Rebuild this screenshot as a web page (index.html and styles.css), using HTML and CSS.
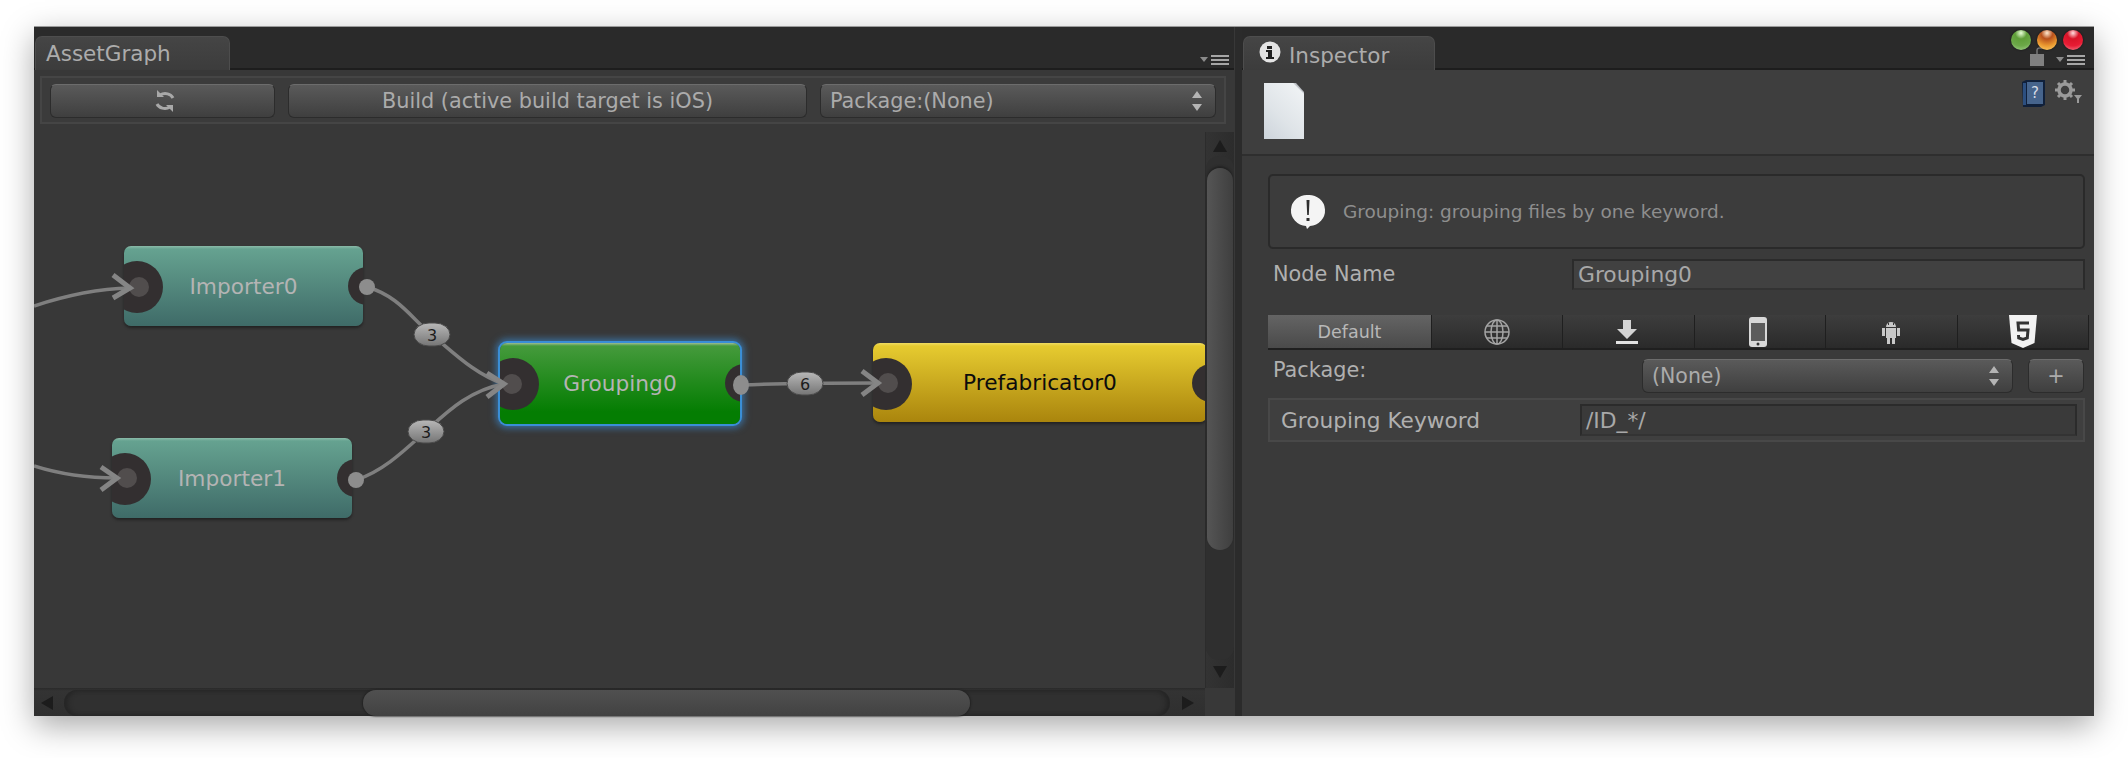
FILE: index.html
```html
<!DOCTYPE html>
<html lang="en">
<head>
    <meta charset="UTF-8">
    <title>AssetGraph</title>
    <link rel="stylesheet" href="styles.css">
</head>
<body>
    <div class="window">
        <!-- Left pane: graph -->
        <div class="graph-pane">
            <div class="tab-bar">
                <div class="tab tab-graph">AssetGraph</div>
                <svg class="menu-icon" width="29" height="10" viewBox="0 0 29 10"><path d="M0 2h8l-4 5z" fill="#8a8a8a"/><path d="M11 0h18v2H11zM11 4h18v2H11zM11 8h18v2H11z" fill="#a6a6a6"/></svg>
            </div>
            <div class="toolbar">
                <div class="btn btn-refresh">
                    <svg width="22" height="24" viewBox="0 0 22 24" fill="none" stroke="#a8a8a8" stroke-width="3"><path d="M19 9C17 5 11 3 6 6"/><path d="M3 15c2 4 8 6 13 3"/><path d="M3 1v7h7z" fill="#a8a8a8" stroke="none"/><path d="M19 23v-7h-7z" fill="#a8a8a8" stroke="none"/></svg>
                </div>
                <div class="btn btn-build">Build (active build target is iOS)</div>
                <div class="btn btn-select btn-package">
                    <span>Package:(None)</span>
                    <svg class="updown" width="12" height="20" viewBox="0 0 12 20"><path d="M6 0l5 7H1zM6 20l-5-7h10z" fill="#b4b4b4"/></svg>
                </div>
            </div>
            <div class="graph-body">
                <div class="canvas">
                    <div class="node node-importer node-i0"><span class="port-in"></span><span class="port-out"></span>Importer0</div>
                    <div class="node node-importer node-i1"><span class="port-in"></span><span class="port-out"></span>Importer1</div>
                    <div class="node node-grouping"><span class="port-in"></span><span class="port-out"></span>Grouping0</div>
                    <div class="node node-prefab"><span class="port-in"></span><span class="port-out"></span>Prefabricator0</div>

                    <svg class="edges" width="1171" height="564" viewBox="0 0 1171 564">
                        <defs>
                            <linearGradient id="badge" x1="0" y1="0" x2="0" y2="1">
                                <stop offset="0" stop-color="#b8b8b8"/>
                                <stop offset="1" stop-color="#757575"/>
                            </linearGradient>
                        </defs>
                        <g fill="#514d4d">
                            <circle cx="105" cy="163" r="10"/>
                            <circle cx="93" cy="354" r="10"/>
                            <circle cx="478" cy="260" r="10"/>
                            <circle cx="854" cy="259" r="10"/>
                        </g>
                        <g fill="none" stroke="#7f7f7f" stroke-width="3.5">
                            <path d="M0 182C30 172 60 165 96 164"/>
                            <path d="M0 342C25 350 55 354 83 354"/>
                            <path d="M333 163C365 172 378 195 398 211S440 250 470 260"/>
                            <path d="M322 356C350 347 372 325 392 307S435 266 470 260"/>
                            <path d="M707 261C750 259 800 259 844 259"/>
                        </g>
                        <g fill="none" stroke="#858585" stroke-width="5">
                            <path d="M79 151L96 164L79 174"/>
                            <path d="M67 343L83 354L67 366"/>
                            <path d="M453 249L470 260L453 273"/>
                            <path d="M828 247L844 259L828 271"/>
                        </g>
                        <g fill="#8d8d8d">
                            <circle cx="333" cy="163" r="8"/>
                            <circle cx="322" cy="356" r="8"/>
                            <ellipse cx="707" cy="261" rx="8" ry="10"/>
                        </g>
                        <g fill="url(#badge)" stroke="#4a4a4a">
                            <rect x="380" y="199" width="36" height="23" rx="15" ry="11.5"/>
                            <rect x="374" y="296" width="36" height="23" rx="15" ry="11.5"/>
                            <rect x="753" y="248" width="36" height="23" rx="15" ry="11.5"/>
                        </g>
                        <g class="badge-text">
                            <text x="398" y="216.500">3</text>
                            <text x="392" y="313.500">3</text>
                            <text x="771" y="265.500">6</text>
                        </g>
                    </svg>
                </div>
                <div class="vscroll">
                    <svg width="14" height="12" viewBox="0 0 14 12"><path d="M7 0l7 12H0z" fill="#1c1c1c"/></svg>
                    <div class="vtrack"><div class="vthumb"></div></div>
                    <svg width="14" height="12" viewBox="0 0 14 12"><path d="M7 12L0 0h14z" fill="#1c1c1c"/></svg>
                </div>
            </div>
            <div class="hscroll-row">
                <div class="hscroll">
                    <svg width="12" height="14" viewBox="0 0 12 14"><path d="M0 7l12-7v14z" fill="#1c1c1c"/></svg>
                    <div class="htrack"><div class="hthumb"></div></div>
                    <svg width="12" height="14" viewBox="0 0 12 14"><path d="M12 7L0 0v14z" fill="#1c1c1c"/></svg>
                </div>
                <div class="corner"></div>
            </div>
        </div>

        <div class="divider"></div>

        <!-- Right pane: inspector -->
        <div class="inspector">
            <div class="tab-bar">
                <div class="tab tab-inspector">
                    <svg width="22" height="22" viewBox="0 0 22 22"><circle cx="11" cy="11" r="10.5" fill="#e4e4e4"/><path d="M8 5h5v3H8zM7 9h6v7h2v2H7v-2h2v-5H7z" fill="#222"/></svg>
                    Inspector
                </div>
                <svg class="lock-icon" width="14" height="19" viewBox="0 0 14 19"><path d="M7 7V3c0-2 4-3 5-1" fill="none" stroke="#777" stroke-width="1.5"/><path d="M0 7h14v12H0z" fill="#808080"/></svg>
                <svg class="menu-icon menu-inspector" width="29" height="10" viewBox="0 0 29 10"><path d="M0 2h8l-4 5z" fill="#8a8a8a"/><path d="M11 0h18v2H11zM11 4h18v2H11zM11 8h18v2H11z" fill="#a6a6a6"/></svg>
            </div>

            <div class="lights">
                <span class="light light-green"></span>
                <span class="light light-orange"></span>
                <span class="light light-red"></span>
            </div>

            <div class="inspector-head">
                <div class="file-icon"></div>
                <svg class="book-icon" width="24" height="27" viewBox="0 0 24 27">
                    <path d="M1 2l4-2h19v25l-4 2H2z" fill="#10203a"/>
                    <path d="M6 2h16v22H6z" fill="#46648c"/>
                    <path d="M2 3h3v22H2z" fill="#2c4f80"/>
                    <text x="14" y="18" class="book-text">?</text>
                </svg>
                <svg class="gear-icon" width="28" height="26" viewBox="0 0 28 26">
                    <circle cx="10" cy="10" r="6" fill="none" stroke="#9a9a9a" stroke-width="3.500"/>
                    <path d="M10 0v20M0 10h20M3 3l14 14M17 3L3 17" stroke="#9a9a9a" stroke-width="3" stroke-dasharray="3 14"/>
                    <path d="M19 15h8l-4 5z" fill="#9a9a9a"/>
                    <path d="M22 19h2v4h-2z" fill="#9a9a9a"/>
                </svg>
            </div>

            <div class="inspector-body">
                <div class="help-box">
                    <svg width="36" height="36" viewBox="0 0 36 36">
                        <path d="M18 1a16 15.500 0 0 1 2 31l-3 3-1-3A16 15.500 0 0 1 18 1z" fill="#f4f4f4"/>
                        <path d="M16.500 6h3l-.7 15h-1.600zM16.500 24h3v3h-3z" fill="#2f2f2f"/>
                    </svg>
                    <span>Grouping: grouping files by one keyword.</span>
                </div>

                <div class="field-row">
                    <label class="field-label">Node Name</label>
                    <div class="field-input field-name">Grouping0</div>
                </div>

                <div class="platform-tabs">
                    <div class="platform platform-on">Default</div>
                    <div class="platform">
                        <svg width="26" height="26" viewBox="0 0 26 26" fill="none" stroke="#a4a4a4" stroke-width="1.500"><circle cx="13" cy="13" r="12"/><ellipse cx="13" cy="13" rx="6" ry="12"/><path d="M13 1v24M1 13h24M3 7h20M3 19h20"/></svg>
                    </div>
                    <div class="platform">
                        <svg class="icon-download" width="22" height="24" viewBox="0 0 22 24"><path d="M7 0h8v9h6L11 19 1 9h6z" fill="#d4d4d4"/><path d="M0 21h22v3H0z" fill="#e2e2e2"/></svg>
                    </div>
                    <div class="platform">
                        <svg class="icon-phone" width="18" height="30" viewBox="0 0 18 30"><rect width="18" height="30" rx="3" fill="#d8d8d8"/><rect x="2" y="6" width="14" height="18" fill="#5c5c5c"/><circle cx="9" cy="27" r="1.500" fill="#333"/></svg>
                    </div>
                    <div class="platform">
                        <svg width="18" height="24" viewBox="0 0 18 24" fill="#c8c8c8"><path d="M4 7a5 5 0 0 1 10 0z"/><path d="M4 8h10v10H4zM0 8h3v8H0zM15 8h3v8h-3zM5 18h3v6H5zM10 18h3v6h-3z"/><path d="M6 3h1v2H6zM11 3h1v2h-1z" fill="#333"/></svg>
                    </div>
                    <div class="platform">
                        <svg width="28" height="33" viewBox="0 0 28 33"><path d="M0 0h28l-2.500 28L14 33 2.500 28z" fill="#f2f2f2"/><path d="M20 8H9l.6 7h9.400l-.7 8-4.300 1.500L9.700 23l-.2-3" fill="none" stroke="#333" stroke-width="3"/></svg>
                    </div>
                </div>

                <div class="package-row">
                    <label class="field-label package-label">Package:</label>
                    <div class="btn btn-select package-select">
                        <span>(None)</span>
                        <svg class="updown" width="12" height="20" viewBox="0 0 12 20"><path d="M6 0l5 7H1zM6 20l-5-7h10z" fill="#b4b4b4"/></svg>
                    </div>
                    <div class="btn btn-plus">+</div>
                </div>

                <div class="keyword-row">
                    <label class="field-label keyword-label">Grouping Keyword</label>
                    <div class="field-input field-keyword">/ID_*/</div>
                </div>
            </div>
        </div>
    </div>
</body>
</html>
```

FILE: styles.css
```css
* {
    margin: 0;
    padding: 0;
    box-sizing: border-box;
}

html,
body {
    height: 100%;
}

body {
    background: #fff;
    font-family: "DejaVu Sans", sans-serif;
    font-size: 20px;
    color: #b0b0b0;
    padding: 26px 0 0 34px;
}

.window {
    position: relative;
    display: flex;
    width: 2060px;
    height: 690px;
    background: #383838;
    box-shadow: 0 10px 30px rgba(0,0,0,0.34);
    border-top: 1px solid #9a9a9a;
}

/* Tab bars */
.tab-bar {
    display: flex;
    align-items: flex-end;
    height: 43px;
    background: #2a2a2a;
    border-bottom: 2px solid #1d1d1d;
    flex-shrink: 0;
}

.tab {
    display: flex;
    align-items: center;
    height: 34px;
    margin-bottom: -2px;
    background: linear-gradient(#454545, #3c3c3c);
    border: 1px solid #4d4d4d;
    border-bottom: 0;
    border-radius: 7px 7px 0 0;
    font-size: 21.500px;
    color: #acacac;
}

.tab-graph {
    width: 195px;
    margin-left: 1px;
    padding-left: 10px;
}

.tab-inspector {
    width: 192px;
    margin-left: 1px;
    padding: 4px 0 0 15px;
    gap: 8px;
}

.tab-inspector svg {
    margin-top: -7px;
}

.menu-icon {
    margin: 0 5px 3px auto;
}

.menu-inspector {
    margin-left: 12px;
    margin-right: 9px;
}

.lock-icon {
    margin: 0 0 2px auto;
}

.lights {
    position: absolute;
    top: 3px;
    right: 11px;
    display: flex;
    gap: 6px;
}

.light {
    width: 20px;
    height: 20px;
    border-radius: 50%;
    box-shadow: 0 0 2px #111;
}

.light-green { background: radial-gradient(circle at 50% 15%, #e9ffd8 0, #5f9e38 30%, #6ca848 65%, #a9d694 100%); }
.light-orange { background: radial-gradient(circle at 50% 15%, #ffe9d0 0, #b8501c 30%, #eb9a30 65%, #ffd673 100%); }
.light-red { background: radial-gradient(circle at 50% 15%, #ffe0e0 0, #d81428 30%, #e81c34 65%, #f78a98 100%); }

/* Graph pane */
.graph-pane {
    display: flex;
    flex-direction: column;
    width: 1200px;
    flex-shrink: 0;
}

.toolbar {
    display: flex;
    gap: 13px;
    margin: 6px 8px 0 6px;
    padding: 6px 8px;
    height: 48px;
    background: #3b3b3b;
    border: 2px solid #454545;
    flex-shrink: 0;
}

.btn {
    display: flex;
    align-items: center;
    justify-content: center;
    height: 34px;
    background: linear-gradient(#5a5a5a, #3f3f3f);
    border: 1px solid #2c2c2c;
    border-top-color: #6c6c6c;
    border-radius: 6px;
    color: #ababab;
    font-size: 20.800px;
}

.btn-refresh {
    width: 225px;
    padding-left: 4px;
}

.btn-build { width: 519px; }

.btn-select {
    justify-content: space-between;
    padding: 0 12px 0 9px;
}

.btn-package { width: 396px; }

.graph-body {
    display: flex;
    flex: 1;
    min-height: 0;
}

.canvas {
    position: relative;
    flex: 1;
    overflow: hidden;
}

.edges {
    position: absolute;
    left: 0;
    top: 0;
}

.badge-text text {
    font-size: 16px;
    fill: #1c1c1c;
    text-anchor: middle;
}

/* Nodes */
.node {
    position: absolute;
    display: flex;
    align-items: center;
    justify-content: center;
    height: 80px;
    border-radius: 7px;
    overflow: hidden;
    font-size: 21.700px;
    color: #b4b4b4;
    box-shadow: 0 2px 3px rgba(0,0,0,0.4);
}

.node-i0 { left: 90px; top: 122px; width: 239px; }
.node-i1 { left: 78px; top: 314px; width: 240px; }

.node-importer {
    background: linear-gradient(#8bbba9 0, #65a290 3px, #3f6b68 100%);
}

.node-grouping {
    left: 466px;
    top: 219px;
    width: 240px;
    height: 81px;
    background: linear-gradient(#9cbc92 0, #459a3c 3px, #047d02 85%);
    box-shadow: 0 0 0 2px #3a8ed6, 0 0 7px 4px rgba(58,142,214,0.65);
}

.node-prefab {
    left: 839px;
    top: 219px;
    width: 334px;
    height: 79px;
    background: linear-gradient(#f0dd63 0, #e6cb30 3px, #aa850d 100%);
    color: #0c0c0c;
}

.port-in,
.port-out {
    position: absolute;
    border-radius: 50%;
    background: #332f30;
}

.port-in {
    left: -13px;
    top: 15px;
    width: 52px;
    height: 52px;
}

.port-out {
    right: -23px;
    top: 21px;
    width: 38px;
    height: 38px;
}

/* Scrollbars */
.vscroll {
    display: flex;
    flex-direction: column;
    align-items: center;
    width: 29px;
    margin-top: 8px;
    padding-top: 8px;
    padding-bottom: 10px;
    background: linear-gradient(90deg, #333, #2c2c2c);
    border-left: 1px solid #2c2c2c;
}

.vtrack {
    flex: 1;
    width: 100%;
    margin: 4px 0 6px;
    background: #2f2f2f;
    border-radius: 13px;
}

.vthumb {
    width: 26px;
    height: 382px;
    margin: 12px 0 0 1px;
    background: linear-gradient(90deg, #555, #3f3f3f);
    border-radius: 13px;
    box-shadow: 0 -2px 2px #222;
}

.hscroll-row {
    display: flex;
    height: 28px;
    flex-shrink: 0;
}

.hscroll {
    display: flex;
    align-items: center;
    flex: 1;
    padding: 2px 11px 0 7px;
    background: linear-gradient(#2a2a2a 0, #333 3px, #2f2f2f 100%);
}

.htrack {
    flex: 1;
    height: 100%;
    margin: 0 12px 0 11px;
    background: #303030;
    border-radius: 13px;
    box-shadow: inset 4px 0 4px #262626, inset -4px 0 4px #262626;
}

.hthumb {
    width: 607px;
    height: 100%;
    margin-left: 299px;
    background: linear-gradient(#505050, #424242);
    border-radius: 13px;
    box-shadow: -1px 0 2px #222, 1px 0 2px #222;
}

.corner {
    width: 29px;
    background: #383838;
}

.divider {
    width: 8px;
    flex-shrink: 0;
    background: #2b2b2b;
    border-left: 1px solid #383838;
}

/* Inspector */
.inspector {
    display: flex;
    flex-direction: column;
    flex: 1;
    min-width: 0;
    background: #3a3a3a;
}

.inspector-head {
    display: flex;
    height: 86px;
    padding: 13px 11px 0 22px;
    background: #3e3e3e;
    border-bottom: 2px solid #2e2e2e;
    flex-shrink: 0;
}

.file-icon {
    width: 40px;
    height: 56px;
    background: linear-gradient(225deg, #b8bcc2 0, #b8bcc2 10%, #eef1f3 12%, #dfe4e8 60%, #cdd4db 100%);
    clip-path: polygon(0 0, 80% 0, 100% 16%, 100% 100%, 0 100%);
}

.book-icon {
    margin: -3px 10px 0 auto;
}

.book-text {
    font-size: 15px;
    fill: #d6dce6;
    text-anchor: middle;
}

.gear-icon {
    margin-top: -3px;
}

.inspector-body {
    padding: 18px 9px 0 26px;
}

.help-box {
    display: flex;
    align-items: center;
    gap: 17px;
    height: 75px;
    padding: 0 0 0 20px;
    background: #3c3c3c;
    border: 2px solid #2a2a2a;
    border-radius: 5px;
    font-size: 18.500px;
    color: #8e8e8e;
}

.field-row {
    display: flex;
    align-items: center;
    margin-top: 10px;
}

.field-label {
    font-size: 20.800px;
    color: #b0b0b0;
}

.field-row .field-label {
    width: 304px;
    padding-left: 5px;
    margin-top: -2px;
}

.field-input {
    display: flex;
    align-items: center;
    background: #414141;
    border: 2px solid #2b2b2b;
    border-bottom-color: #333;
    color: #a8a8a8;
    font-size: 21.800px;
    padding-left: 4px;
}

.field-name {
    flex: 1;
    height: 31px;
}

.platform-tabs {
    display: flex;
    width: 821px;
    height: 35px;
    margin-top: 25px;
    background: linear-gradient(#3d3d3d, #2a2a2a);
    border-bottom: 2px solid #1f1f1f;
}

.platform {
    display: flex;
    align-items: center;
    justify-content: center;
    flex: 1;
    border-right: 1px solid #1f1f1f;
}

.platform-on {
    flex: none;
    width: 164px;
    background: linear-gradient(#646464, #4a4a4a);
    font-size: 17.500px;
    color: #b8b8b8;
}

.icon-download,
.icon-phone {
    margin-right: 4px;
}

.package-row {
    display: flex;
    margin-top: 9px;
}

.package-label {
    flex: 1;
    padding-left: 5px;
    margin-top: -1px;
}

.package-select {
    width: 371px;
    font-size: 20.500px;
}

.btn-plus {
    width: 56px;
    margin: 0 1px 0 15px;
}

.keyword-row {
    display: flex;
    align-items: center;
    height: 44px;
    margin-top: 5px;
    padding: 0 6px 0 11px;
    background: #3f3f3f;
    border: 2px solid #484848;
}

.keyword-label {
    width: 299px;
    font-size: 21.700px;
}

.field-keyword {
    flex: 1;
    height: 32px;
    background: #3a3a3a;
}
```
